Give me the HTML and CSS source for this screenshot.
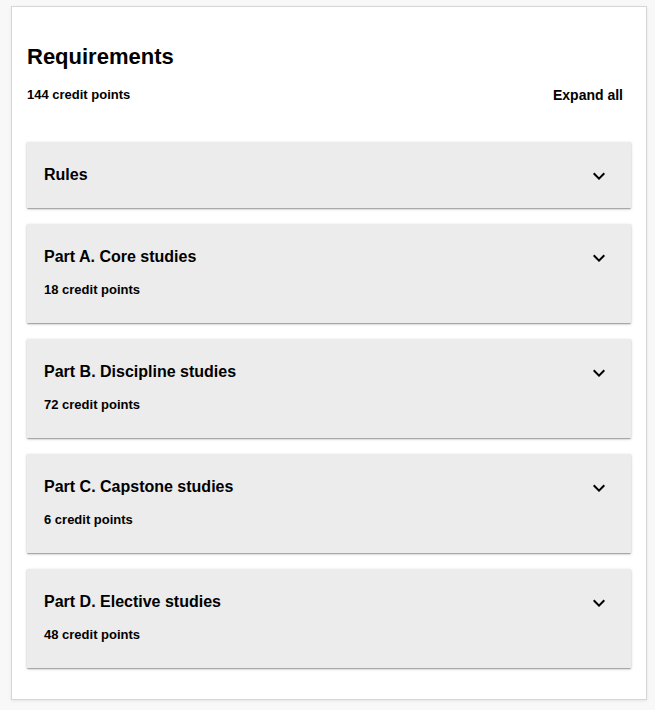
FILE: index.html
```html
<!DOCTYPE html>
<html lang="en">
<head>
    <meta charset="UTF-8">
    <meta name="viewport" content="width=device-width, initial-scale=1.0">
    <title>Requirements</title>
    <link rel="stylesheet" href="styles.css">
</head>
<body>
    <div class="card">
        <h2 class="title">Requirements</h2>
        <div class="summary">
            <div class="points">144 credit points</div>
            <button class="expand">Expand all</button>
        </div>

        <div class="panel">
            <div class="panel-head">
                <div class="panel-title">Rules</div>
                <svg class="chevron" viewBox="0 0 24 24"><path d="M16.59 8.59L12 13.17 7.41 8.59 6 10l6 6 6-6z"/></svg>
            </div>
        </div>

        <div class="panel">
            <div class="panel-head">
                <div class="panel-title">Part A. Core studies</div>
                <svg class="chevron" viewBox="0 0 24 24"><path d="M16.59 8.59L12 13.17 7.41 8.59 6 10l6 6 6-6z"/></svg>
            </div>
            <div class="panel-sub">18 credit points</div>
        </div>

        <div class="panel">
            <div class="panel-head">
                <div class="panel-title">Part B. Discipline studies</div>
                <svg class="chevron" viewBox="0 0 24 24"><path d="M16.59 8.59L12 13.17 7.41 8.59 6 10l6 6 6-6z"/></svg>
            </div>
            <div class="panel-sub">72 credit points</div>
        </div>

        <div class="panel">
            <div class="panel-head">
                <div class="panel-title">Part C. Capstone studies</div>
                <svg class="chevron" viewBox="0 0 24 24"><path d="M16.59 8.59L12 13.17 7.41 8.59 6 10l6 6 6-6z"/></svg>
            </div>
            <div class="panel-sub">6 credit points</div>
        </div>

        <div class="panel">
            <div class="panel-head">
                <div class="panel-title">Part D. Elective studies</div>
                <svg class="chevron" viewBox="0 0 24 24"><path d="M16.59 8.59L12 13.17 7.41 8.59 6 10l6 6 6-6z"/></svg>
            </div>
            <div class="panel-sub">48 credit points</div>
        </div>
    </div>
</body>
</html>
```

FILE: styles.css
```css
body {
    font-family: "Liberation Sans", Arial, sans-serif;
    background-color: #f8f8f8;
    color: #000;
    margin: 0;
    padding: 6px 8px 11px 11px;
}

.card {
    background: #fff;
    border: 1px solid #d6d6d6;
    box-shadow: 0 1px 3px rgba(0, 0, 0, 0.08);
    padding: 37px 15px 31px 15px;
}

.title {
    margin: 0;
    font-size: 22px;
    line-height: 26px;
    font-weight: bold;
}

.summary {
    display: flex;
    justify-content: space-between;
    align-items: center;
    margin-top: 17px;
    margin-bottom: 39px;
}

.points {
    font-size: 13px;
    font-weight: bold;
    line-height: 16px;
}

.expand {
    font-family: inherit;
    font-size: 14px;
    font-weight: bold;
    color: #000;
    background: none;
    border: none;
    padding: 0 8px;
    line-height: 16px;
    cursor: pointer;
}

.panel {
    background-color: #ececec;
    padding: 23px 20px 23px 17px;
    margin-bottom: 16px;
    box-shadow: 0 1px 1px rgba(0, 0, 0, 0.14), 0 2px 1px -1px rgba(0, 0, 0, 0.12), 0 1px 3px rgba(0, 0, 0, 0.2);
}

.panel:last-child {
    margin-bottom: 0;
}

.panel-head {
    display: flex;
    justify-content: space-between;
    align-items: flex-start;
    height: 20px;
}

.panel-title {
    font-size: 16px;
    font-weight: bold;
    line-height: 20px;
}

.chevron {
    width: 24px;
    height: 24px;
    margin-top: -1px;
    fill: #000;
    flex-shrink: 0;
}

.panel-sub {
    margin-top: 15px;
    padding-bottom: 2px;
    font-size: 13px;
    font-weight: bold;
    line-height: 16px;
}
```
